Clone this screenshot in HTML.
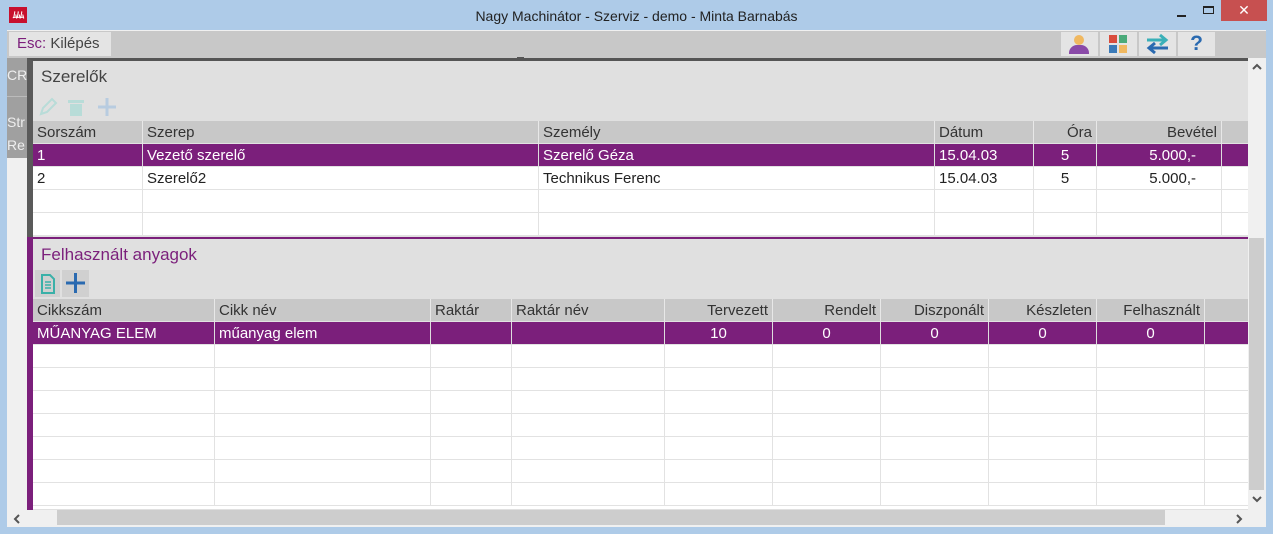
<!DOCTYPE html>
<html><head><meta charset="utf-8"><style>
*{box-sizing:border-box;margin:0;padding:0}
body{width:1273px;height:534px;position:relative;overflow:hidden;background:#aecbe8;font-family:"Liberation Sans",sans-serif;font-size:15px;color:#222}
.a{position:absolute}
.row{position:absolute;left:0;right:0;height:23px;border-bottom:1px solid #e2e2e2;background:#fff}
.c{position:absolute;top:0;height:23px;line-height:24px;padding:0 4px;border-right:1px solid #e2e2e2;white-space:nowrap;overflow:hidden}
.h{background:#c8c8c8}
.h .c{border-right:1px solid #e8e8e8;color:#333}
.sel{background:#7b1f7b;color:#fff}
.sel .c{border-right:1px solid #ddd}
.r{text-align:right}.m{text-align:center}
</style></head><body>
<div class="a" style="left:9px;top:7px;width:18px;height:16px;background:#c8102e;color:#fff;font-size:9px;font-weight:bold;line-height:16px;text-align:center;letter-spacing:-1px">ﾑﾑﾑ</div>
<div class="a" style="left:0;width:1273px;top:8px;text-align:center;font-size:14px;color:#222">Nagy Machinátor - Szerviz - demo - Minta Barnabás</div>
<div class="a" style="left:1177px;top:15px;width:9px;height:2px;background:#222"></div>
<div class="a" style="left:1203px;top:6px;width:11px;height:8px;border:1px solid #222;border-top-width:2px"></div>
<div class="a" style="left:1221px;top:0;width:46px;height:21px;background:#c75050;color:#fff;text-align:center;line-height:21px;font-size:14px">✕</div>
<div class="a" style="left:7px;top:30px;width:1259px;height:497px;background:#f0f0f0"></div>
<div class="a" style="left:7px;top:31px;width:1259px;height:27px;background:#c8c8c8"></div>
<div class="a" style="left:9px;top:32px;width:102px;height:24px;background:#e4e4e4;line-height:24px;padding-left:8px;color:#444"><span style="color:#7b1f7b">Esc:</span> Kilépés</div>
<div class="a" style="left:517px;top:57px;width:7px;height:2px;background:#555"></div>
<div class="a" style="left:1061px;top:32px;width:37px;height:24px;background:#e4e4e4"><div class="a" style="left:13px;top:3px;width:10px;height:10px;border-radius:50%;background:#f0b860"></div><div class="a" style="left:8px;top:13px;width:20px;height:9px;border-radius:8px 8px 0 0;background:#8a4aa8"></div></div>
<div class="a" style="left:1100px;top:32px;width:37px;height:24px;background:#e4e4e4"><div class="a" style="left:9px;top:3px;width:8px;height:8px;background:#d94c3c"></div><div class="a" style="left:19px;top:3px;width:8px;height:8px;background:#4aaa7a"></div><div class="a" style="left:9px;top:13px;width:8px;height:8px;background:#3a7ab8"></div><div class="a" style="left:19px;top:13px;width:8px;height:8px;background:#f0b860"></div></div>
<div class="a" style="left:1139px;top:32px;width:37px;height:24px;background:#e4e4e4"><svg width="37" height="24"><path d="M8 8H26M21 3l6 5-6 5" stroke="#3ab0b8" stroke-width="3" fill="none"/><path d="M29 16H11M16 11l-6 5 6 5" stroke="#2a6ab0" stroke-width="3" fill="none"/></svg></div>
<div class="a" style="left:1178px;top:32px;width:37px;height:24px;background:#e4e4e4;text-align:center;font-weight:bold;font-size:21px;color:#2a6ab0;line-height:24px">?</div>
<div class="a" style="left:7px;top:58px;width:20px;height:100px;background:#a0a0a0;color:#fff;font-size:14px;overflow:hidden;white-space:nowrap"><div style="position:absolute;top:9px;left:0;color:#eee">CR</div><div style="position:absolute;top:38px;left:0;width:20px;height:1px;background:#bbb"></div><div style="position:absolute;top:56px;color:#eee">Str</div><div style="position:absolute;top:79px;color:#eee">Re</div></div>
<div class="a" style="left:27px;top:58px;width:1221px;height:179px;background:#e0e0e0;border-top:3px solid #555;border-left:6px solid #5a5a5a">
 <div class="a" style="left:8px;top:6px;font-size:17px;color:#444">Szerelők</div>
 <svg class="a" style="left:5px;top:35px" width="80" height="22"><path d="M3 18l2-6 9-9 4 4-9 9z" fill="none" stroke="#b8dcd8" stroke-width="2"/><rect x="30" y="4" width="16" height="3" fill="#b8dcd8"/><rect x="32" y="8" width="12" height="12" fill="#b8dcd8"/><path d="M60 11h18M69 2v18" stroke="#b8cce0" stroke-width="3"/></svg>
 <div class="a" style="left:0;top:60px;width:1215px;height:116px">
  <div class="row h" style="top:0"><div class="c" style="left:0;width:110px">Sorszám</div><div class="c" style="left:110px;width:396px">Szerep</div><div class="c" style="left:506px;width:396px">Személy</div><div class="c" style="left:902px;width:99px">Dátum</div><div class="c r" style="left:1001px;width:63px">Óra</div><div class="c r" style="left:1064px;width:125px">Bevétel</div></div>
  <div class="row sel" style="top:23px"><div class="c" style="left:0;width:110px">1</div><div class="c" style="left:110px;width:396px">Vezető szerelő</div><div class="c" style="left:506px;width:396px">Szerelő Géza</div><div class="c" style="left:902px;width:99px">15.04.03</div><div class="c m" style="left:1001px;width:63px">5</div><div class="c r" style="left:1064px;width:125px;padding-right:25px">5.000,-</div></div>
  <div class="row" style="top:46px"><div class="c" style="left:0;width:110px">2</div><div class="c" style="left:110px;width:396px">Szerelő2</div><div class="c" style="left:506px;width:396px">Technikus Ferenc</div><div class="c" style="left:902px;width:99px">15.04.03</div><div class="c m" style="left:1001px;width:63px">5</div><div class="c r" style="left:1064px;width:125px;padding-right:25px">5.000,-</div></div>
  <div class="row" style="top:69px"><div class="c" style="left:0;width:110px"></div><div class="c" style="left:110px;width:396px"></div><div class="c" style="left:506px;width:396px"></div><div class="c" style="left:902px;width:99px"></div><div class="c" style="left:1001px;width:63px"></div><div class="c" style="left:1064px;width:125px"></div></div>
  <div class="row" style="top:92px"><div class="c" style="left:0;width:110px"></div><div class="c" style="left:110px;width:396px"></div><div class="c" style="left:506px;width:396px"></div><div class="c" style="left:902px;width:99px"></div><div class="c" style="left:1001px;width:63px"></div><div class="c" style="left:1064px;width:125px"></div></div>
 </div>
</div>
<div class="a" style="left:27px;top:237px;width:1221px;height:273px;background:#e0e0e0;border-top:2px solid #7b1f7b;border-left:6px solid #7b1f7b">
 <div class="a" style="left:8px;top:6px;font-size:17px;color:#7b1f7b">Felhasznált anyagok</div>
 <div class="a" style="left:2px;top:31px;width:25px;height:27px;background:#d0d0d0"><svg width="25" height="27"><path d="M7 5h8l4 4v14H7z" fill="none" stroke="#3ab0a8" stroke-width="2"/><path d="M10 12h6M10 15h6M10 18h6" stroke="#3ab0a8" stroke-width="1.5"/></svg></div>
 <div class="a" style="left:29px;top:31px;width:27px;height:27px;background:#d0d0d0"><svg width="27" height="27"><path d="M4 13h19M13.5 3v20" stroke="#2a6ab0" stroke-width="3"/></svg></div>
 <div class="a" style="left:0;top:60px;width:1215px;height:210px;background:#fff">
  <div class="row h" style="top:0"><div class="c" style="left:0;width:182px">Cikkszám</div><div class="c" style="left:182px;width:216px">Cikk név</div><div class="c" style="left:398px;width:81px">Raktár</div><div class="c" style="left:479px;width:153px">Raktár név</div><div class="c r" style="left:632px;width:108px">Tervezett</div><div class="c r" style="left:740px;width:108px">Rendelt</div><div class="c r" style="left:848px;width:108px">Diszponált</div><div class="c r" style="left:956px;width:108px">Készleten</div><div class="c r" style="left:1064px;width:108px">Felhasznált</div></div>
  <div class="row sel" style="top:23px"><div class="c" style="left:0;width:182px">MŰANYAG ELEM</div><div class="c" style="left:182px;width:216px">műanyag elem</div><div class="c" style="left:398px;width:81px"></div><div class="c" style="left:479px;width:153px"></div><div class="c m" style="left:632px;width:108px">10</div><div class="c m" style="left:740px;width:108px">0</div><div class="c m" style="left:848px;width:108px">0</div><div class="c m" style="left:956px;width:108px">0</div><div class="c m" style="left:1064px;width:108px">0</div></div>
  <div id="rows"></div>
 </div>
</div>
<script>
var h='';for(var i=0;i<7;i++){var t=46+i*23;h+='<div class="row" style="top:'+t+'px">';[[0,182],[182,216],[398,81],[479,153],[632,108],[740,108],[848,108],[956,108],[1064,108]].forEach(function(c){h+='<div class="c" style="left:'+c[0]+'px;width:'+c[1]+'px"></div>'});h+='</div>';}document.getElementById('rows').innerHTML=h;
</script>
<div class="a" style="left:1248px;top:58px;width:18px;height:452px;background:#f0f0f0"></div>
<div class="a" style="left:1249px;top:238px;width:15px;height:252px;background:#cdcdcd"></div>
<svg class="a" style="left:1251px;top:62px" width="12" height="10"><path d="M2 7l4-4 4 4" stroke="#555" stroke-width="2" fill="none"/></svg>
<svg class="a" style="left:1251px;top:494px" width="12" height="10"><path d="M2 3l4 4 4-4" stroke="#555" stroke-width="2" fill="none"/></svg>
<div class="a" style="left:7px;top:510px;width:1259px;height:17px;background:#f0f0f0"></div>
<div class="a" style="left:57px;top:510px;width:1108px;height:15px;background:#cdcdcd"></div>
<svg class="a" style="left:12px;top:513px" width="10" height="12"><path d="M7 2l-4 4 4 4" stroke="#555" stroke-width="2" fill="none"/></svg>
<svg class="a" style="left:1234px;top:513px" width="10" height="12"><path d="M3 2l4 4-4 4" stroke="#555" stroke-width="2" fill="none"/></svg>
</body></html>
